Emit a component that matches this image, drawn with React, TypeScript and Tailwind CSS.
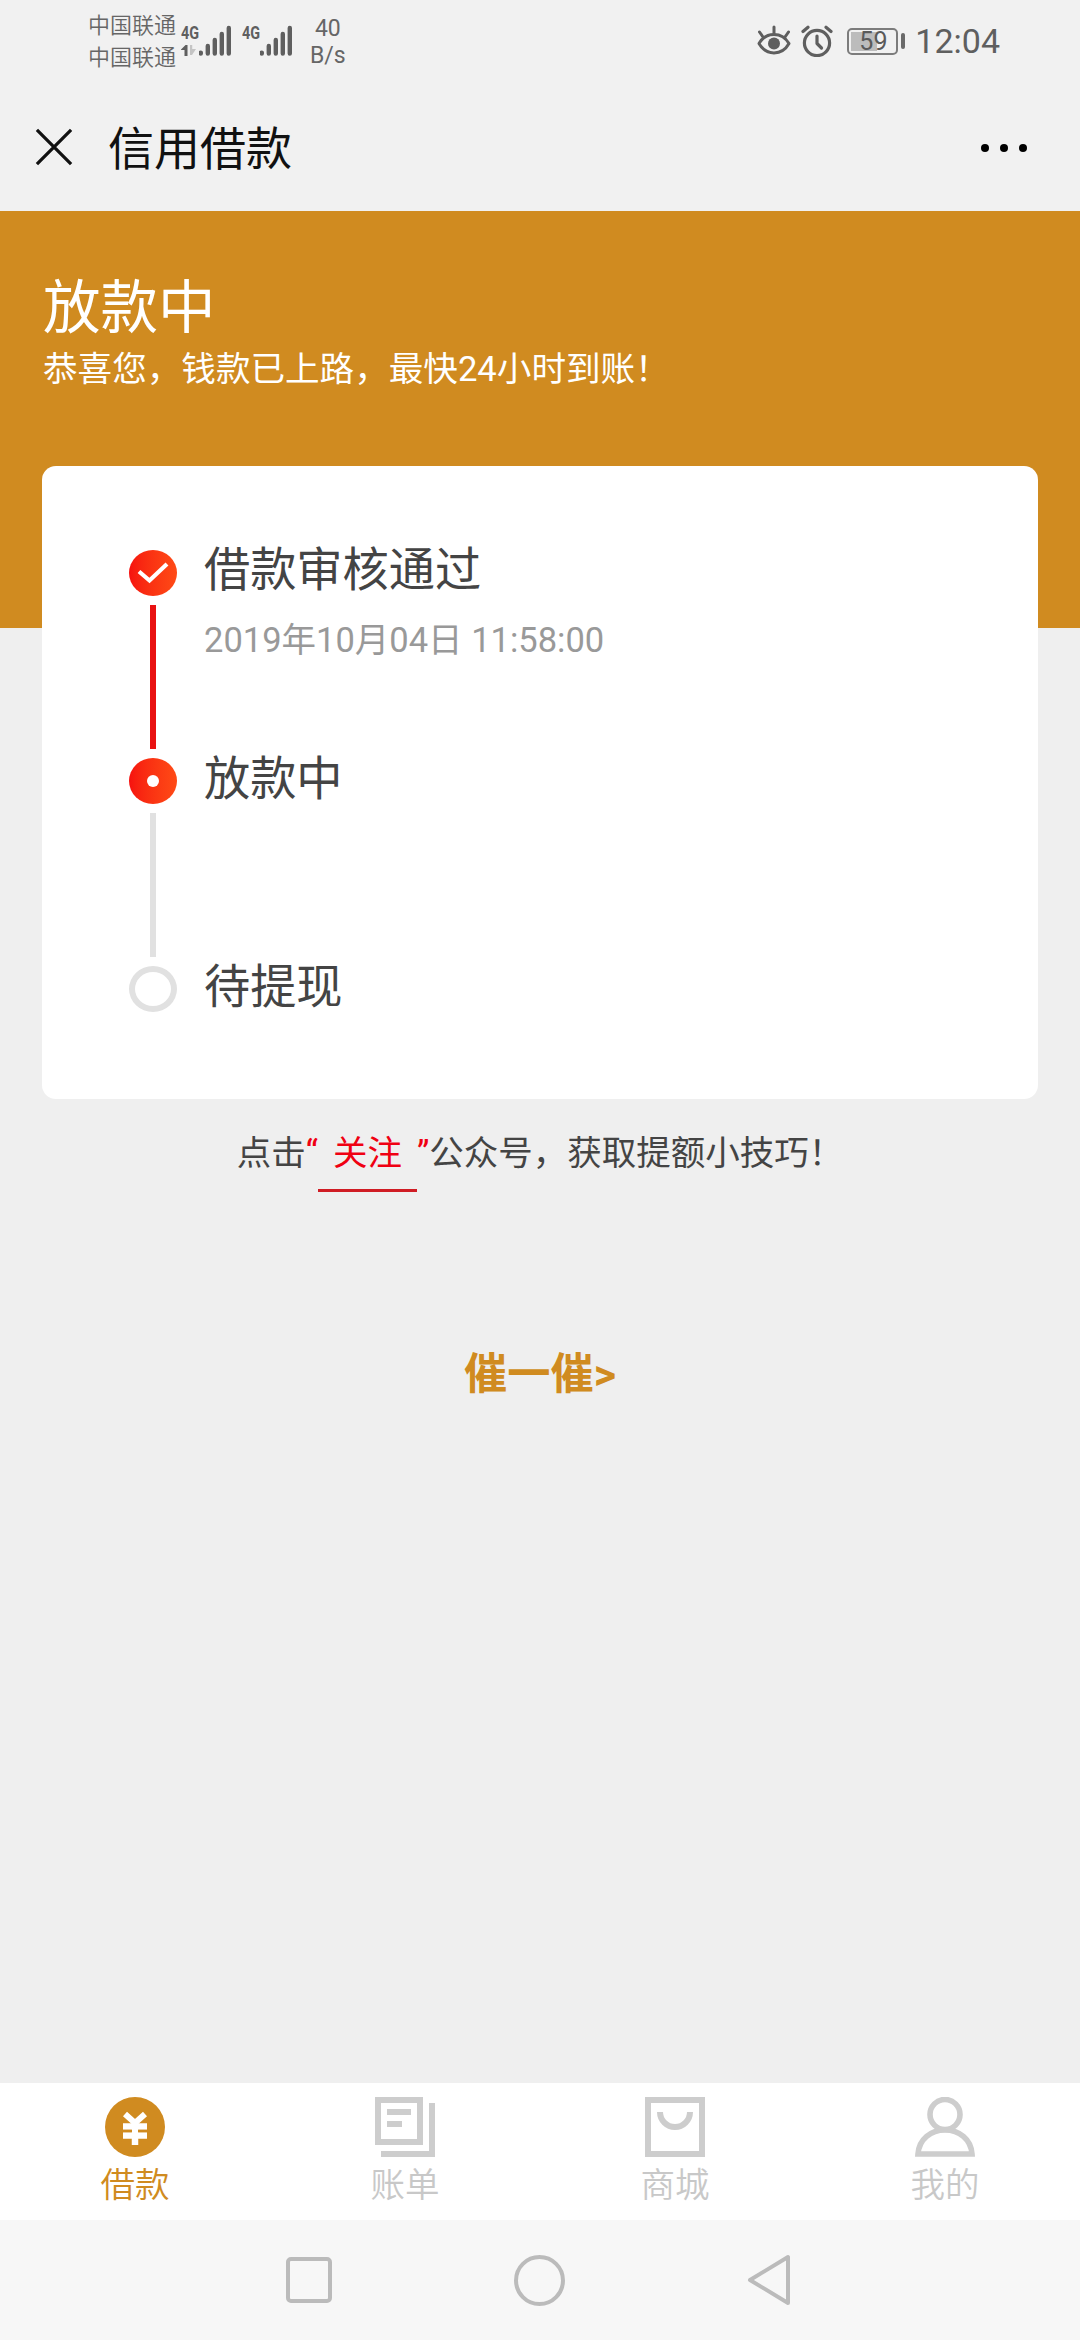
import clsx from "clsx"
import type { ReactNode } from "react"

type StepState = "done" | "active" | "pending"

const steps: { title: string; time?: string; state: StepState }[] = [
  { title: "借款审核通过", time: "2019年10月04日 11:58:00", state: "done" },
  { title: "放款中", state: "active" },
  { title: "待提现", state: "pending" },
]

function Signal({ data }: { data?: boolean }) {
  return (
    <div className="flex h-8 w-[52px]">
      <div className="flex w-[18px] flex-col">
        <span className="origin-left scale-x-80 text-[18px] leading-[15px] font-bold text-[#5f5f5f]">4G</span>
        {data && (
          <svg className="mt-1" width="16" height="12" viewBox="0 0 16 12">
            <path d="M0 5.500L4.500 1H6.500V12H3.500V6H0Z" fill="#5f5f5f" />
            <path d="M9 1H11.200V5H15L11 11H9Z" fill="#c4c4c4" />
          </svg>
        )}
      </div>
      <svg width="34" height="32" viewBox="18 0 34 32" stroke="#5f5f5f" strokeWidth="4.400" strokeLinecap="round">
        <path d="M19.800 27.600V28.600M26.800 21V28.600M33.800 15V28.600M40.800 9V28.600M47.800 3V28.600" />
      </svg>
    </div>
  )
}

function EyeIcon() {
  return (
    <svg width="34" height="32" viewBox="0 0 34 32" fill="none" stroke="#5f5f5f" strokeWidth="3" strokeLinecap="round">
      <path d="M2 18.500C9 6.500 25 6.500 32 18.500C25 31 9 31 2 18.500Z" strokeLinejoin="round" />
      <path d="M17 2V8M2.500 7L6 12M31.500 7L28 12" />
      <circle cx="17" cy="18.500" r="6" fill="#5f5f5f" stroke="none" />
    </svg>
  )
}

function AlarmIcon() {
  return (
    <svg width="32" height="32" viewBox="0 0 32 32" fill="none" stroke="#5f5f5f" strokeWidth="3.200" strokeLinecap="round">
      <circle cx="16" cy="18" r="12.600" />
      <path d="M16 11V18.500L20.500 23" strokeLinejoin="round" />
      <path d="M2 6.500L7 2.200M30 6.500L25 2.200" />
    </svg>
  )
}

function Battery() {
  return (
    <div className="flex items-center gap-[3px]">
      <div className="flex h-[27px] w-[51px] rounded-[5px] border-2 border-[#7c7c7c] p-0.5">
        <div className="flex h-full w-[26px] items-center justify-start bg-[#bcbcbc] pl-[8px] text-[25px] leading-none text-[#5a5a5a]">
          59
        </div>
      </div>
      <div className="h-4 w-1 rounded-xs bg-[#6a6a6a]" />
    </div>
  )
}

function StatusBar() {
  return (
    <div className="flex h-[84px] items-center pr-[80px] pb-0.5 pl-[88px] text-[#666]">
      <div className="pt-0.5 text-[22px] leading-[32px] font-[350]">
        <div>中国联通</div>
        <div>中国联通</div>
      </div>
      <div className="ml-[5px] flex gap-[9px]">
        <Signal data />
        <Signal />
      </div>
      <div className="ml-[16px] pt-0.5 text-center text-[23px] leading-[27px]">
        <div>40</div>
        <div>B/s</div>
      </div>
      <div className="ml-auto flex items-center">
        <EyeIcon />
        <div className="ml-[10px]">
          <AlarmIcon />
        </div>
        <div className="ml-[14px]">
          <Battery />
        </div>
        <div className="ml-[10px] text-[34px] leading-[40px] text-[#5f5f5f]">12:04</div>
      </div>
    </div>
  )
}

function TitleBar() {
  return (
    <div className="flex h-[127px] items-center pr-[53px] pl-[35px]">
      <svg className="mb-0.5" width="38" height="38" viewBox="0 0 40 40" stroke="#111" strokeWidth="3.400">
        <path d="M2 2L38 38M38 2L2 38" />
      </svg>
      <h1 className="ml-[35px] pt-0.5 text-[46px] leading-[60px] text-[#111]">信用借款</h1>
      <svg className="ml-auto" width="46" height="8" viewBox="0 0 46 8">
        <circle cx="4" cy="4" r="4" />
        <circle cx="23" cy="4" r="4" />
        <circle cx="42" cy="4" r="4" />
      </svg>
    </div>
  )
}

function StepIcon({ state }: { state: StepState }) {
  if (state === "pending") {
    return <div className="h-[46px] w-12 rounded-[50%] border-[6px] border-[#e1e1e1]" />
  }
  return (
    <div className="flex h-[46px] w-12 items-center justify-center rounded-[50%] bg-linear-to-r from-[#f6100f] to-[#ff4a16]">
      {state === "done" ? (
        <svg width="32" height="22" viewBox="0 0 32 22" fill="none" stroke="#fff" strokeWidth="4.200">
          <path d="M2 9.500L12.500 18.500L30 2" />
        </svg>
      ) : (
        <div className="size-3 rounded-full bg-white" />
      )}
    </div>
  )
}

function Timeline() {
  return (
    <div className="mx-[42px] h-[633px] rounded-[14px] bg-white pt-[84px] pl-[87px]">
      {steps.map((step) => (
        <div key={step.title} className="flex h-[208px] gap-[27px]">
          <div className="flex flex-col items-center">
            <StepIcon state={step.state} />
            {step.state !== "pending" && (
              <div
                className={clsx(
                  "mt-[9px] h-36 w-1.5",
                  step.state === "done" ? "bg-[#e91212]" : "bg-[#e1e1e1]"
                )}
              />
            )}
          </div>
          <div>
            <div
              className={clsx(
                "text-[46.2px] text-[#444]",
                step.state === "done" ? "leading-[40px]" : "leading-[43px]"
              )}
            >
              {step.title}
            </div>
            {step.time && (
              <div className="mt-[30px] text-[34.5px] leading-[40px] text-[#999]">{step.time}</div>
            )}
          </div>
        </div>
      ))}
    </div>
  )
}

function LoanIcon() {
  return (
    <svg width="60" height="60" viewBox="0 0 60 60">
      <circle cx="30" cy="30" r="30" fill="#d08b20" />
      <g fill="none" stroke="#fff">
        <path d="M20 17L30 26L40 17" strokeWidth="6" />
        <path d="M18 29.500H42M18 38.500H42" strokeWidth="6.500" />
        <path d="M30 24V48" strokeWidth="6.500" />
      </g>
      <path d="M18 34H27M33 34H42" stroke="#d08b20" strokeWidth="2.400" />
    </svg>
  )
}

function BillIcon() {
  return (
    <svg width="60" height="60" viewBox="0 0 60 60" fill="none" stroke="#cdcdcd" strokeWidth="6">
      <path d="M3 3H45V45H3Z" />
      <path d="M12 15H36M12 27H27" />
      <path d="M57 6V57H6" />
    </svg>
  )
}

function MallIcon() {
  return (
    <svg width="60" height="60" viewBox="0 0 60 60" fill="none" stroke="#cdcdcd" strokeWidth="6">
      <path d="M3 3H57V57H3Z" />
      <path d="M15 15A15 15 0 0 0 45 15" />
    </svg>
  )
}

function MineIcon() {
  return (
    <svg width="60" height="60" viewBox="0 0 60 60" fill="none" stroke="#cdcdcd" strokeWidth="5.600">
      <circle cx="30" cy="17.500" r="15" />
      <path d="M3 57C4 42 16 33 30 33C44 33 56 42 57 57Z" />
    </svg>
  )
}

const tabs: { label: string; icon: ReactNode; active?: boolean }[] = [
  { label: "借款", icon: <LoanIcon />, active: true },
  { label: "账单", icon: <BillIcon /> },
  { label: "商城", icon: <MallIcon /> },
  { label: "我的", icon: <MineIcon /> },
]

function TabBar() {
  return (
    <div className="grid h-[137px] grid-cols-4 bg-white pt-[14px]">
      {tabs.map((tab) => (
        <div key={tab.label} className="flex flex-col items-center">
          {tab.icon}
          <div
            className={clsx(
              "mt-[8px] text-[34.5px] leading-[40px] font-[350]",
              tab.active ? "text-[#d08b20]" : "text-[#c8c8c8]"
            )}
          >
            {tab.label}
          </div>
        </div>
      ))}
    </div>
  )
}

function SystemNav() {
  return (
    <div className="flex h-[120px] items-center justify-between bg-[#f7f7f7] pr-[289px] pl-[286px]">
      <div className="size-[46px] rounded-[5px] border-4 border-[#bbb]" />
      <div className="size-[51px] rounded-full border-4 border-[#bbb]" />
      <svg width="44" height="52" viewBox="0 0 44 52" fill="none" stroke="#bbb" strokeWidth="4" strokeLinejoin="round">
        <path d="M41 3V49L3 26Z" />
      </svg>
    </div>
  )
}

export default function App() {
  return (
    <div
      lang="zh-CN"
      className="flex h-[2340px] w-[1080px] flex-col bg-[#efefef] font-[Roboto,'Noto_Sans_CJK_SC',sans-serif]"
    >
      <header className="bg-[#f1f1f1]">
        <StatusBar />
        <TitleBar />
      </header>
      <div className="h-[417px] bg-[#d08b20] pt-[66px] pl-[43px] text-white">
        <h2 className="text-[57.5px] leading-[64px]">放款中</h2>
        <p className="mt-[6px] text-[34.6px] leading-[44px]">恭喜您，钱款已上路，最快24小时到账！</p>
      </div>
      <div className="-mt-[162px]">
        <Timeline />
      </div>
      <div className="mt-[31px] flex justify-center text-[34.5px] leading-[46px] text-[#444]">
        <span>点击</span>
        <span className="text-[#f00012]">“</span>
        <span className="h-[62px] border-b-[3px] border-[#d01c24] px-[15px] text-[#f00012]">关注</span>
        <span className="text-[#f00012]">”</span>
        <span>公众号，获取提额小技巧！</span>
      </div>
      <div className="mt-[157px] text-center text-[43.2px] leading-[52px] font-bold text-[#d08b20]">催一催&gt;</div>
      <div className="mt-auto">
        <TabBar />
        <SystemNav />
      </div>
    </div>
  )
}
